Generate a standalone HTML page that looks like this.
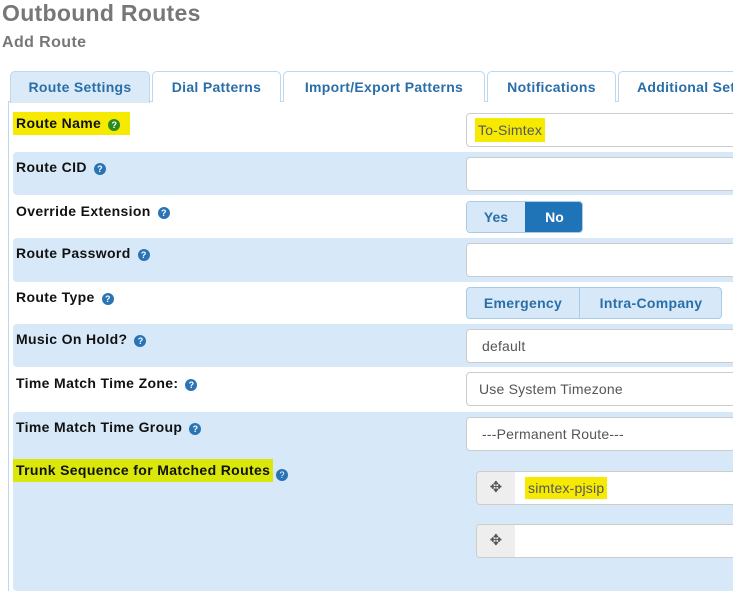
<!DOCTYPE html>
<html><head><style>
*{box-sizing:border-box;margin:0;padding:0}
body{width:733px;height:591px;overflow:hidden;background:#fff;font-family:"Liberation Sans",sans-serif;position:relative}
.a{position:absolute}
h1{position:absolute;left:2px;top:0;font-size:23px;color:#777;font-weight:bold;letter-spacing:0.3px}
h2{position:absolute;left:2px;top:34px;font-size:16px;color:#777;font-weight:bold;letter-spacing:0.4px}
.tab{position:absolute;top:71px;height:31px;border:1px solid #bcd7ee;border-bottom:none;border-radius:5px 5px 0 0;background:#fff;color:#2a6ea8;font-weight:bold;font-size:14px;text-align:center;line-height:30px;white-space:nowrap;overflow:hidden;letter-spacing:0.3px}
.row{position:absolute;left:13px;width:730px;background:#d7e9f8;border-radius:4px}
.lbl{position:absolute;left:16px;font-size:14px;font-weight:bold;color:#111;white-space:nowrap;letter-spacing:0.35px}
.q{display:inline-block;width:12px;height:12px;border-radius:50%;background:#2a74b5;color:#fff;font-size:9px;line-height:12px;text-align:center;margin-left:7px;vertical-align:0px;letter-spacing:0}
.in{position:absolute;left:466px;width:280px;height:34px;background:#fff;border:1px solid #ccc;border-radius:4px;font-size:14px;color:#555;padding-left:15px;line-height:32px;letter-spacing:0.2px}
.hl{background:#f5ea00}
</style></head><body>
<h1>Outbound Routes</h1>
<h2>Add Route</h2>
<div class="a" style="left:8px;top:101px;width:1px;height:490px;background:#bcd7ee"></div>
<div class="a" style="left:8px;top:101px;width:725px;height:1px;background:#bcd7ee"></div>
<div class="tab" style="left:10px;width:140px;background:#dbeaf8;height:32px">Route Settings</div>
<div class="tab" style="left:152px;width:129px">Dial Patterns</div>
<div class="tab" style="left:283px;width:202px">Import/Export Patterns</div>
<div class="tab" style="left:487px;width:129px">Notifications</div>
<div class="tab" style="left:618px;width:130px;text-align:left;padding-left:18px">Additional Settings</div>

<div class="row" style="top:152px;height:43px"></div>
<div class="row" style="top:238px;height:44px"></div>
<div class="row" style="top:324px;height:43px"></div>
<div class="row" style="top:412px;height:179px"></div>

<div class="lbl hl" style="left:13px;top:112px;padding:3px 10px 4px 3px">Route Name<span class="q" style="background:#2a8a1e">?</span></div>
<div class="lbl" style="top:159px">Route CID<span class="q">?</span></div>
<div class="lbl" style="top:203px">Override Extension<span class="q">?</span></div>
<div class="lbl" style="top:245px">Route Password<span class="q">?</span></div>
<div class="lbl" style="top:289px">Route Type<span class="q">?</span></div>
<div class="lbl" style="top:331px">Music On Hold?<span class="q">?</span></div>
<div class="lbl" style="top:375px">Time Match Time Zone:<span class="q">?</span></div>
<div class="lbl" style="top:419px">Time Match Time Group<span class="q">?</span></div>
<div class="lbl" style="left:13px;top:459px;padding:3px 3px 4px 3px;background:#d9e80a;width:260px">Trunk Sequence for Matched Routes</div>
<div class="a" style="left:276px;top:465px"><span class="q" style="margin:0">?</span></div>

<div class="in" style="top:113px;padding-left:8px"><span class="hl" style="padding:4px 3px;color:#556">To-Simtex</span></div>
<div class="in" style="top:157px"></div>
<div class="a" style="left:466px;top:201px;width:117px;height:32px;border:1px solid #a9cbe8;border-radius:4px;overflow:hidden;font-weight:bold;font-size:14px">
<div class="a" style="left:0;top:0;width:58px;height:30px;background:#d7e9f8;color:#2a6ea8;text-align:center;line-height:30px">Yes</div>
<div class="a" style="left:58px;top:0;width:59px;height:30px;background:#1f73b7;color:#fff;text-align:center;line-height:30px">No</div></div>
<div class="in" style="top:243px"></div>
<div class="a" style="left:466px;top:287px;width:256px;height:32px;border:1px solid #a9cbe8;border-radius:4px;background:#d7e9f8;font-weight:bold;font-size:14px;color:#2a6ea8;overflow:hidden;letter-spacing:0.3px">
<div class="a" style="left:0;top:0;width:113px;line-height:30px;text-align:center;border-right:1px solid #a9cbe8;height:30px">Emergency</div>
<div class="a" style="left:113px;top:0;width:142px;line-height:30px;text-align:center">Intra-Company</div></div>
<div class="in" style="top:329px">default</div>
<div class="in" style="top:372px;padding-left:12px">Use System Timezone</div>
<div class="in" style="top:417px">---Permanent Route---</div>
<div class="in" style="left:476px;top:471px;padding-left:0;background:#fff;overflow:hidden">
<div class="a" style="left:0;top:0;width:38px;height:32px;background:#eee;color:#555;text-align:center;line-height:32px;font-size:15px">✥</div>
<span class="a hl" style="left:48px;top:5px;line-height:22px;padding:0 3px;color:#556">simtex-pjsip</span></div>
<div class="in" style="left:476px;top:524px;padding-left:0;overflow:hidden">
<div class="a" style="left:0;top:0;width:38px;height:32px;background:#eee;color:#555;text-align:center;line-height:32px;font-size:15px">✥</div></div>
</body></html>
